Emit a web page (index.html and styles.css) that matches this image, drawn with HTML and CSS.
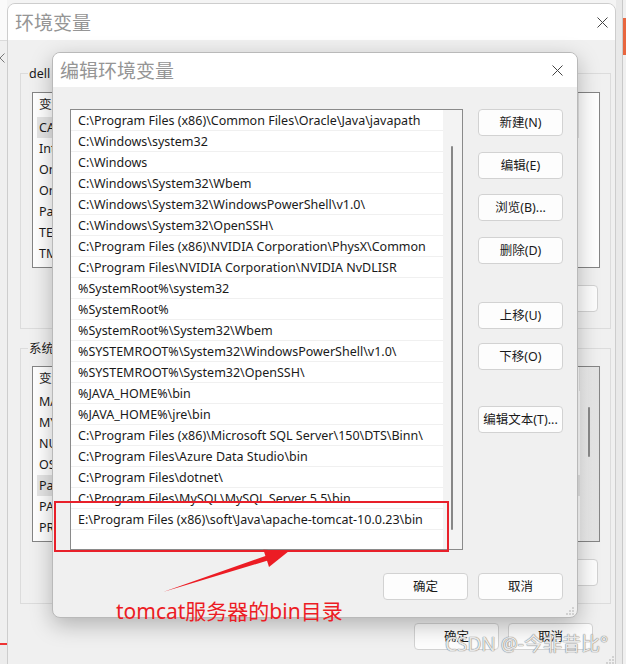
FILE: index.html
```html
<!DOCTYPE html>
<html lang="zh-CN">
<head>
<meta charset="utf-8">
<title>编辑环境变量</title>
<link rel="stylesheet" href="styles.css">
</head>
<body>
  <div class="behind-left">
    <svg class="behind-x" width="10" height="10" viewBox="0 0 10 10"><path d="M0.5 0.5L9.5 9.5M9.5 0.5L0.5 9.5" stroke="#777" stroke-width="1"/></svg>
  </div>
  <div class="behind-right"><div class="other-win"><div class="other-orange"></div></div></div>

  <div class="win env-win">
    <div class="env-title">
      <span>环境变量</span>
      <svg width="11" height="11" viewBox="0 0 11 11"><path d="M0.5 0.5L10.5 10.5M10.5 0.5L0.5 10.5" stroke="#444" stroke-width="1"/></svg>
    </div>
    <div class="env-body">
      <div class="group">
        <span class="group-label">dell 的用户变量(U)</span>
        <div class="vlist">
          <div class="vcol">
            <div class="vhead"><span class="c1">变量</span><span>值</span></div>
            <div class="vrow sel">CATALINA_HOME</div>
            <div class="vrow">IntelliJ IDEA</div>
            <div class="vrow">OneDrive</div>
            <div class="vrow">OneDriveConsumer</div>
            <div class="vrow">Path</div>
            <div class="vrow">TEMP</div>
            <div class="vrow">TMP</div>
          </div>
        </div>
        <div class="grow-btns"><button class="btn bg-btn">删除(D)</button></div>
      </div>
      <div class="group group2">
        <span class="group-label">系统变量(S)</span>
        <div class="vlist vlist2">
          <div class="vcol">
            <div class="vhead"><span class="c1">变量</span><span>值</span></div>
            <div class="vrow">MAVEN_HOME</div>
            <div class="vrow">MYSQL_HOME</div>
            <div class="vrow">NUMBER_OF_PROCESSORS</div>
            <div class="vrow">OS</div>
            <div class="vrow sel">Path</div>
            <div class="vrow">PATHEXT</div>
            <div class="vrow">PROCESSOR_ARCHITECTURE</div>
          </div>
          <div class="vtrack"><div class="vthumb"></div></div>
        </div>
        <div class="grow-btns"><button class="btn bg-btn">删除(L)</button></div>
      </div>
      <div class="env-foot">
        <button class="btn">确定</button>
        <button class="btn">取消</button>
      </div>
    </div>
    <svg class="grip grip-env" width="8" height="8" viewBox="0 0 8 8"><g fill="#a8a8a8"><circle cx="7" cy="1" r="0.8"/><circle cx="4" cy="4" r="0.8"/><circle cx="7" cy="4" r="0.8"/><circle cx="1" cy="7" r="0.8"/><circle cx="4" cy="7" r="0.8"/><circle cx="7" cy="7" r="0.8"/></g></svg>
  </div>

  <div class="win edit-win">
    <div class="edit-title">
      <span>编辑环境变量</span>
      <svg width="11" height="11" viewBox="0 0 11 11"><path d="M0.5 0.5L10.5 10.5M10.5 0.5L0.5 10.5" stroke="#444" stroke-width="1"/></svg>
    </div>
    <div class="edit-body">
      <div class="edit-main">
        <div class="plist">
          <div class="prows">
            <div class="prow">C:\Program Files (x86)\Common Files\Oracle\Java\javapath</div>
            <div class="prow">C:\Windows\system32</div>
            <div class="prow">C:\Windows</div>
            <div class="prow">C:\Windows\System32\Wbem</div>
            <div class="prow">C:\Windows\System32\WindowsPowerShell\v1.0\</div>
            <div class="prow">C:\Windows\System32\OpenSSH\</div>
            <div class="prow">C:\Program Files (x86)\NVIDIA Corporation\PhysX\Common</div>
            <div class="prow">C:\Program Files\NVIDIA Corporation\NVIDIA NvDLISR</div>
            <div class="prow">%SystemRoot%\system32</div>
            <div class="prow">%SystemRoot%</div>
            <div class="prow">%SystemRoot%\System32\Wbem</div>
            <div class="prow">%SYSTEMROOT%\System32\WindowsPowerShell\v1.0\</div>
            <div class="prow">%SYSTEMROOT%\System32\OpenSSH\</div>
            <div class="prow">%JAVA_HOME%\bin</div>
            <div class="prow">%JAVA_HOME%\jre\bin</div>
            <div class="prow">C:\Program Files (x86)\Microsoft SQL Server\150\DTS\Binn\</div>
            <div class="prow">C:\Program Files\Azure Data Studio\bin</div>
            <div class="prow">C:\Program Files\dotnet\</div>
            <div class="prow">C:\Program Files\MySQL\MySQL Server 5.5\bin</div>
            <div class="prow">E:\Program Files (x86)\soft\Java\apache-tomcat-10.0.23\bin</div>
          </div>
          <div class="ptrack"><div class="pthumb"></div></div>
        </div>
        <div class="side">
          <div class="side-group g1">
            <button class="btn">新建(N)</button>
            <button class="btn">编辑(E)</button>
            <button class="btn">浏览(B)...</button>
            <button class="btn">删除(D)</button>
          </div>
          <div class="side-group g2">
            <button class="btn">上移(U)</button>
            <button class="btn">下移(O)</button>
          </div>
          <div class="side-group g3">
            <button class="btn">编辑文本(T)...</button>
          </div>
        </div>
      </div>
      <div class="edit-foot">
        <button class="btn">确定</button>
        <button class="btn">取消</button>
      </div>
    </div>
    <svg class="grip grip-edit" width="8" height="8" viewBox="0 0 8 8"><g fill="#a8a8a8"><circle cx="7" cy="1" r="0.8"/><circle cx="4" cy="4" r="0.8"/><circle cx="7" cy="4" r="0.8"/><circle cx="1" cy="7" r="0.8"/><circle cx="4" cy="7" r="0.8"/><circle cx="7" cy="7" r="0.8"/></g></svg>
  </div>

  <div class="annot-box"></div>
  <svg class="annot-arrow" width="135" height="52" viewBox="0 0 135 52"><polygon points="3,47 105.4,11 103.4,4.8 129,6 109,22 107,15.8" fill="#ec1c24"/></svg>
  <div class="annot-text">tomcat服务器的bin目录</div>

  <div class="watermark">CSDN @-今非昔比°</div>
</body>
</html>
```

FILE: styles.css
```css
* { box-sizing: border-box; }
html, body { margin: 0; padding: 0; }
body {
  width: 626px;
  height: 664px;
  overflow: hidden;
  position: relative;
  background: #f4f4f4;
  font-family: "Noto Sans", "Noto Sans CJK SC", sans-serif;
  font-size: 12.5px;
  color: #1a1a1a;
}

/* windows behind */
.behind-left {
  position: absolute;
  left: 0; top: 0;
  width: 7px; height: 664px;
  background: linear-gradient(#fafafa 0 40px, #dadada 40px 41px, #efefef 41px 643px, #e33 643px 645px, #ececec 645px);
  overflow: hidden;
}
.behind-x { position: absolute; left: -5px; top: 53px; }
.behind-right {
  position: absolute;
  left: 616px; top: 0;
  width: 10px; height: 664px;
  background: #e9e9e9;
}
.other-win {
  margin-left: 6px;
  height: 100%;
  border-left: 1px solid #c9c9c9;
  background: #f0f0f0;
  padding-top: 18px;
}
.other-orange { height: 37px; background: #e8663f; }

.win { position: absolute; overflow: hidden; }

/* background window */
.env-win {
  left: 7px; top: 3px;
  width: 609px; height: 680px;
  background: #f0f0f0;
  border: 1px solid #cdcdcd;
  border-radius: 8px 8px 0 0;
}
.env-title {
  height: 36px;
  background: #fff;
  display: flex;
  align-items: center;
  justify-content: space-between;
  padding: 0 7px 0 7px;
  font-size: 19px;
  color: #959595;
}
.env-body { padding: 33px 4px 0 12px; }
.group {
  position: relative;
  border: 1px solid #dcdcdc;
  padding: 18px 10px 16px 11px;
}
.group2 { margin-top: 19px; padding-top: 17px; padding-bottom: 17px; }
.group-label {
  position: absolute;
  left: 7px; top: -9px;
  background: #f0f0f0;
  padding: 0 1px;
  line-height: 17px;
  white-space: nowrap;
}
.vlist {
  height: 176px;
  background: #fff;
  border: 1px solid #858585;
  overflow: hidden;
  display: flex;
}
.vcol { flex: 1; min-width: 0; }
.vlist > .vcol:only-child { margin-right: 20px; }
.vhead {
  height: 24px;
  line-height: 24px;
  padding-left: 6px;
  display: flex;
  border-right: 1px solid #e6e6e6;
}
.vhead .c1 { width: 180px; }
.vrow {
  height: 21px;
  line-height: 21px;
  margin-left: 4px;
  padding-left: 2px;
  white-space: nowrap;
}
.vrow.sel { background: #e5e5e5; }
.vtrack {
  width: 19px;
  background: linear-gradient(90deg, #efefef, #e2e2e2);
  padding-top: 40px;
}
.vthumb { width: 2px; height: 50px; margin-left: 8px; background: #8a8a8a; border-radius: 1px; }
.grow-btns { display: flex; justify-content: flex-end; margin-top: 17px; padding-right: 2px; }
.env-foot { display: flex; justify-content: flex-end; gap: 9px; margin-top: 19px; padding-right: 18px; }

.btn {
  width: 85px;
  height: 27px;
  padding: 0;
  background: #fdfdfd;
  border: 1px solid #d2d2d2;
  border-radius: 4px;
  font-family: "Noto Sans", "Noto Sans CJK SC", sans-serif;
  font-size: 12.5px;
  color: #1a1a1a;
  line-height: 25px;
  white-space: nowrap;
}

/* edit dialog */
.edit-win {
  left: 52px; top: 52px;
  width: 526px; height: 566px;
  background: #f0f0f0;
  border: 1px solid #b9b9b9;
  border-radius: 8px;
  box-shadow: 0 7px 22px rgba(0, 0, 0, 0.26);
}
.edit-title {
  height: 34px;
  background: #fff;
  display: flex;
  align-items: center;
  justify-content: space-between;
  padding: 0 14px 0 7px;
  font-size: 19px;
  color: #959595;
}
.edit-body { padding: 22px 14px 17px 17px; }
.edit-main { display: flex; gap: 15px; }
.plist {
  width: 393px;
  height: 441px;
  background: #fff;
  border: 1px solid #8a8a8a;
  display: flex;
}
.prows { flex: 1; min-width: 0; overflow: hidden; }
.prow {
  height: 21px;
  line-height: 21px;
  padding-left: 7px;
  border-bottom: 1px solid #f0f0f0;
  white-space: nowrap;
}
.ptrack { width: 19px; background: #f3f3f3; padding-top: 36px; }
.pthumb { width: 2px; height: 384px; margin-left: 8px; background: #878787; border-radius: 1px; }
.side { width: 85px; display: flex; flex-direction: column; }
.side-group { display: flex; flex-direction: column; gap: 15.5px; }
.g2 { margin-top: 38px; gap: 14.5px; }
.g3 { margin-top: 36px; }
.edit-foot { display: flex; justify-content: flex-end; gap: 10px; margin-top: 23px; }

.grip { position: absolute; }
.grip-edit { right: 3px; bottom: 2px; }
.grip-env { right: 1px; bottom: 18px; }

/* annotation */
.annot-box {
  position: absolute;
  left: 54px; top: 501px;
  width: 395px; height: 51px;
  border: 2.5px solid #e8202a;
}
.annot-arrow { position: absolute; left: 160px; top: 545px; }
.annot-text {
  position: absolute;
  left: 116px; top: 599px;
  font-size: 21px;
  line-height: 24px;
  color: #ec1c24;
  white-space: nowrap;
}
.watermark {
  position: absolute;
  left: 445px; top: 632px;
  font-size: 19px;
  line-height: 24px;
  color: rgba(248, 248, 248, 0.9);
  text-shadow: 0 0 1px #6e6e6e, 0 0 1px #8a8a8a;
  white-space: nowrap;
}
```
